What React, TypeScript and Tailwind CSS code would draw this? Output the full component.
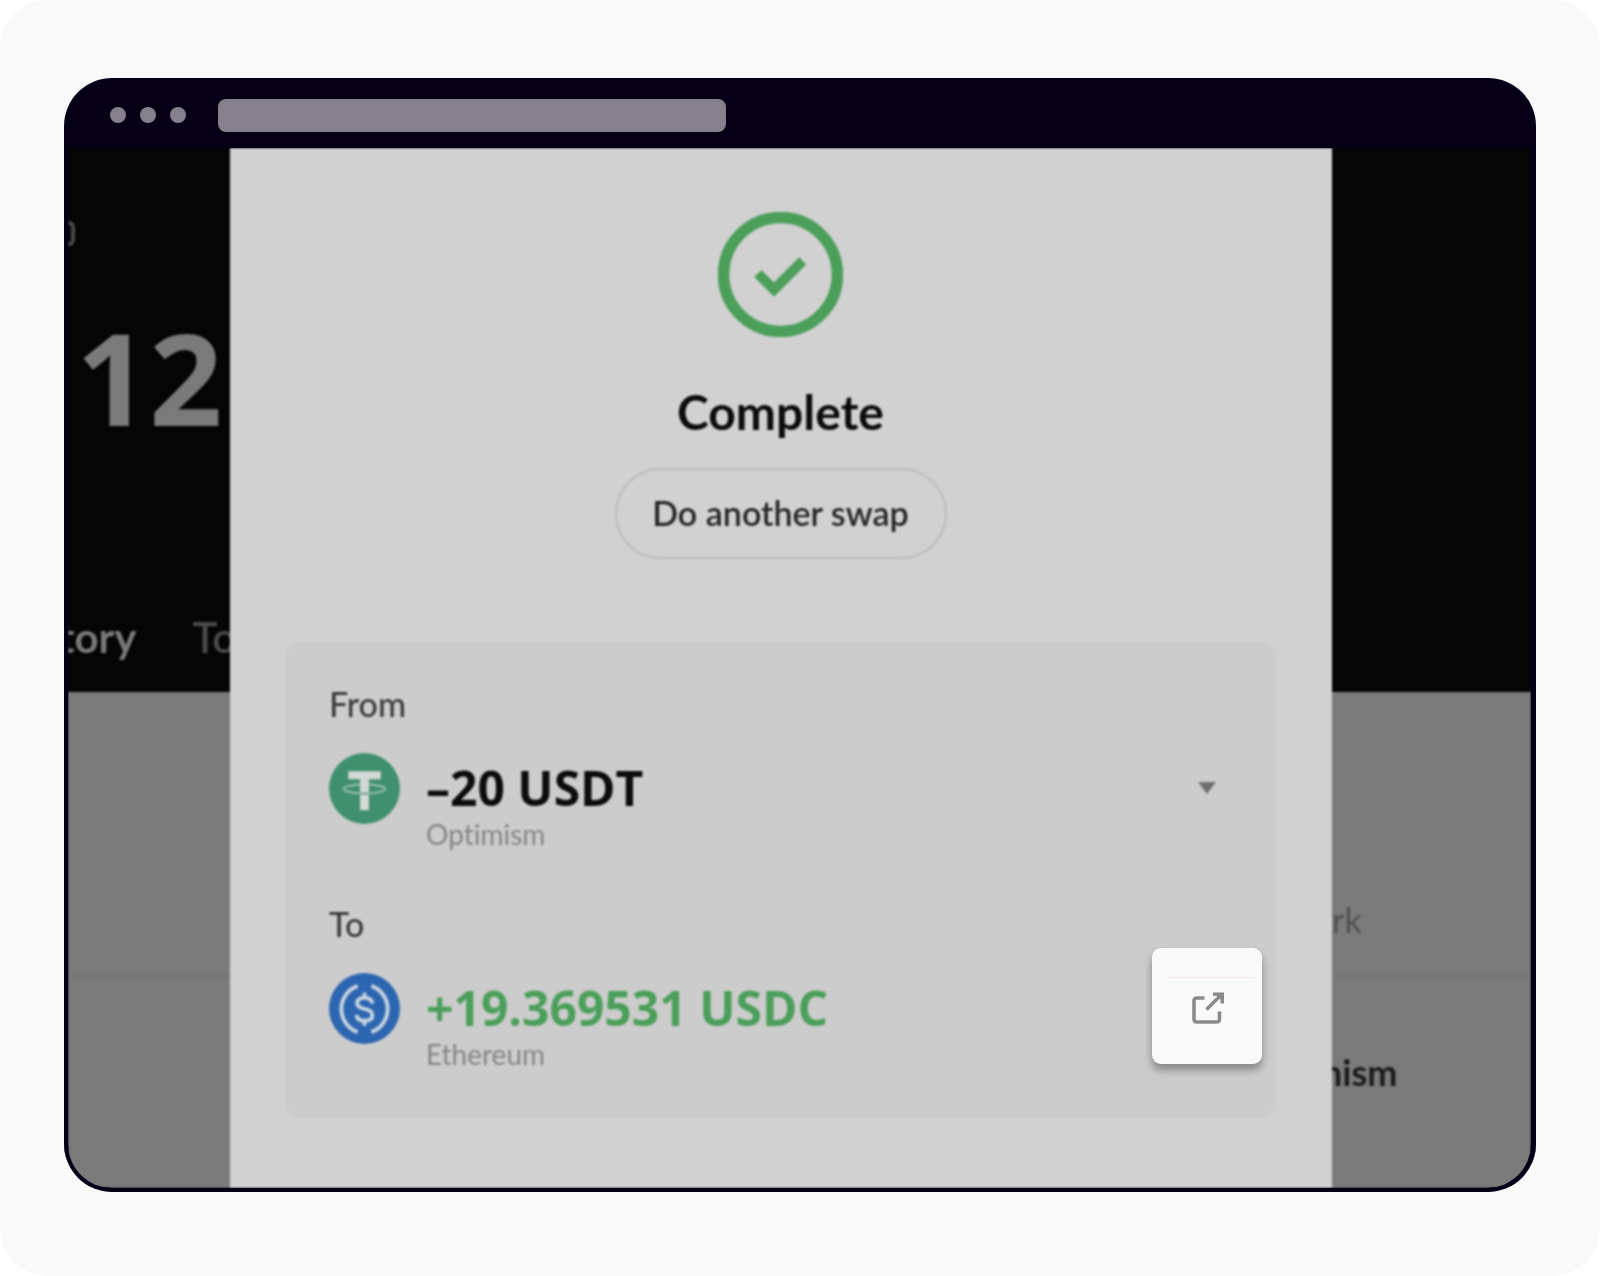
import React from "react";

function Tether() {
  return (
    <svg viewBox="0 0 72 72" className="mt-px size-[71px] shrink-0" aria-hidden="true">
      <circle cx="36" cy="36" r="36" fill="#409070" />
      <path d="M19.500 18.500H52.500V26.500H40.500V58H31.500V26.500H19.500Z" fill="#d4d8d6" />
      <ellipse cx="36" cy="36.500" rx="21" ry="4.600" fill="none" stroke="#a3c4b6" strokeWidth="1.800" />
      <path d="M31.500 30.500H40.500V38.500H31.500Z" fill="#d4d8d6" />
      <path d="M31.500 40.200H40.500V42.200H31.500Z" fill="#6fa68f" />
    </svg>
  );
}

function UsdCoin() {
  return (
    <svg viewBox="0 0 72 72" className="mt-px size-[71px] shrink-0" aria-hidden="true" fill="none" stroke="#c6d3e0" strokeWidth="4">
      <circle cx="36" cy="36" r="36" fill="#2d66b0" stroke="none" />
      <path d="M29 13A25 25 0 0 0 29 60" />
      <path d="M43 13A25 25 0 0 1 43 60" />
      <path d="M44 31C43.500 27 40.500 25 36 25C31.500 25 28.500 27 28.500 30.500C28.500 34 31 35.200 36 36.400C41.500 37.600 44 39.200 44 42.800C44 46.400 41 48.500 36 48.500C31 48.500 28.200 46.500 28 42.500" />
      <path d="M36 20V25M36 48.500V53.500" />
    </svg>
  );
}

type TokenProps = {
  label: string;
  icon: React.ReactNode;
  amount: string;
  network: string;
  amountClass: string;
  action?: React.ReactNode;
};

function TokenRow({ label, icon, amount, network, amountClass, action }: TokenProps) {
  return (
    <div>
      <p className="text-[34px] leading-10 font-medium text-[#3c3c3c]">{label}</p>
      <div className="mt-7 flex items-start gap-[26px]">
        {icon}
        <div className="min-w-0 flex-1 pt-[6px]">
          <p className={amountClass}>{amount}</p>
          <p className="text-[28px] leading-8 text-[#868686]">{network}</p>
        </div>
        {action}
      </div>
    </div>
  );
}

export default function App() {
  return (
    <div className="bg-white font-['Lato','Open_Sans',sans-serif] [font-variant-ligatures:none]">
      <main className="min-h-screen rounded-[48px] bg-[#f9f9f9] px-16 pt-[78px] pb-[84px]">
        <div className="overflow-hidden rounded-[48px] border-b-4 border-[#050018] bg-[#050018]">
          <header className="flex h-[70px] items-center pl-[46px] pt-1">
            <div className="flex gap-[14px]">
              <span className="size-4 rounded-full bg-[#85808b]" />
              <span className="size-4 rounded-full bg-[#85808b]" />
              <span className="size-4 rounded-full bg-[#85808b]" />
            </div>
            <div className="ml-8 h-[33px] w-[508px] rounded-lg bg-[#85808b]" />
          </header>

          <div className="relative ml-1 mr-[5px] overflow-hidden rounded-b-[44px] bg-[#050505]">
            <div className="grid grid-cols-[162px_minmax(0,1fr)_199px] blur-[1px]">
              <aside className="flex flex-col overflow-hidden bg-[#7a7a7a]">
                <div className="h-[544px] bg-[#050505] pt-[73px] whitespace-nowrap">
                  <div className="h-[25px] w-[7px] rounded-r-md border-4 border-l-0 border-[#484848]" />
                  <p className="mt-[59px] pl-2 font-['Open_Sans',sans-serif] text-[128px] leading-[144px] font-bold text-[#7a7a7a]">12</p>
                  <div className="mt-[162px] flex gap-14 text-[42px] leading-[52px]">
                    <span className="-ml-[9px] font-bold text-[#7a7a7a]">tory</span>
                    <span className="font-semibold text-[#4a4a4a]">To</span>
                  </div>
                </div>
                <div className="h-[285px] border-b-2 border-[#737373]" />
              </aside>

              <section className="flex flex-col items-center bg-[#d1d1d1] pt-16 pr-14 pb-[70px] pl-[55px]">
                <svg viewBox="0 0 124 124" className="size-[125px]" fill="none" stroke="#4b9f5a" aria-hidden="true">
                  <circle cx="62" cy="62" r="56.500" strokeWidth="11.500" />
                  <path d="M39.500 61L55.500 77L84 48.500" strokeWidth="10" />
                </svg>
                <h1 className="mt-[45px] text-[48px] leading-[60px] font-bold text-[#0c0c0c]">Complete</h1>
                <button className="mt-[26px] h-[91px] w-[332px] rounded-full border-2 border-[#bdbdbd] pb-[3px] text-[34px] font-semibold text-[#262626]">
                  Do another swap
                </button>
                <div className="mt-[83px] flex w-full flex-col gap-[54px] rounded-2xl bg-[#cccccc] pt-[42px] pr-[60px] pb-12 pl-11">
                  <TokenRow
                    label="From"
                    icon={<Tether />}
                    amount="–20 USDT"
                    network="Optimism"
                    amountClass="font-['Open_Sans',sans-serif] text-[48px] leading-[60px] font-bold text-[#0c0c0c]"
                    action={
                      <button aria-label="Show details" className="mt-[30px]">
                        <svg viewBox="0 0 18 12" className="h-3 w-[18px]" fill="#707070" aria-hidden="true">
                          <path d="M0 0H18L9 12Z" />
                        </svg>
                      </button>
                    }
                  />
                  <TokenRow
                    label="To"
                    icon={<UsdCoin />}
                    amount="+19.369531 USDC"
                    network="Ethereum"
                    amountClass="font-['Open_Sans',sans-serif] text-[48px] leading-[60px] font-bold text-[#4b9f5a]"
                  />
                </div>
              </section>

              <aside className="flex flex-col overflow-hidden bg-[#7a7a7a] whitespace-nowrap">
                <div className="h-[544px] bg-[#050505]" />
                <div className="flex h-[285px] items-end border-b-2 border-[#737373] pb-[35px]">
                  <span className="text-[34px] leading-10 text-[#505050]">rk</span>
                </div>
                <span className="-ml-[10px] mt-[75px] text-[36px] leading-10 font-bold text-[#1c1c1c]">nism</span>
              </aside>
            </div>

            <button
              aria-label="Open in explorer"
              className="absolute right-[269px] bottom-[124px] flex h-[116px] w-[110px] flex-col items-center rounded-[9px] bg-[#f9f9f9] shadow-[0_6px_8px_rgba(0,0,0,0.35)]"
            >
              <span className="mt-[29px] ml-2 h-px w-[86px] bg-[#f8e9ea]" />
              <svg viewBox="0 0 32 32" className="mt-[14px] ml-[2px] size-8" fill="none" stroke="#8a8a8a" strokeWidth="3.600" aria-hidden="true">
                <path d="M12.500 6H5Q2 6 2 9V27Q2 30 5 30H24.500Q27.500 30 27.500 27V19.500" />
                <path d="M14.500 17.500L29 3" />
                <path d="M21 0.500H32V11.500H28.500V7.500L24.800 3.800H21Z" fill="#8a8a8a" stroke="none" />
              </svg>
            </button>
          </div>
        </div>
      </main>
    </div>
  );
}
